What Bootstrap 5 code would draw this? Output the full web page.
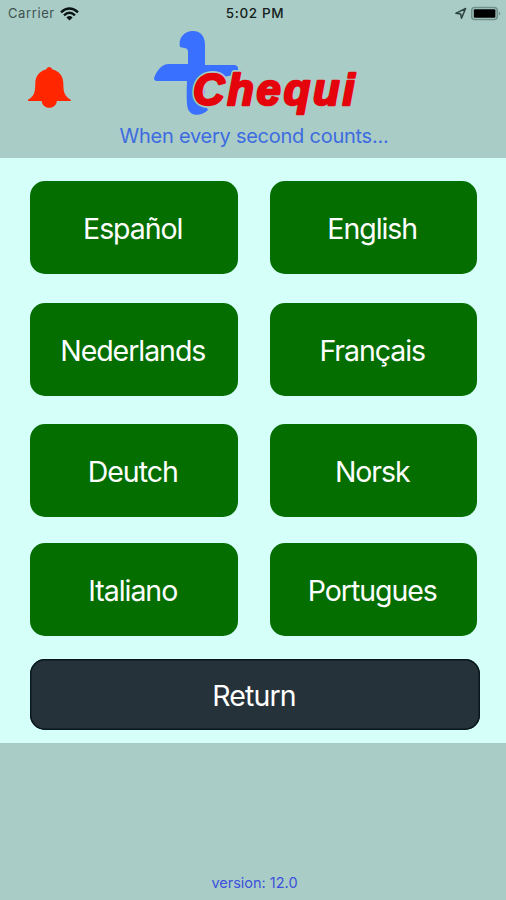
<!DOCTYPE html>
<html lang="en">
<head>
<meta charset="utf-8">
<meta name="viewport" content="width=device-width, initial-scale=1">
<title>Chequi</title>
<link href="https://cdn.jsdelivr.net/npm/bootstrap@5.3.0/dist/css/bootstrap.min.css" rel="stylesheet">
<style>
body{background:#aaccc6;font-family:Inter,"Liberation Sans",sans-serif;height:900px;overflow:hidden}
.status{height:27px;font-size:13px;color:#142120;padding:0 5px 0 8px}
.status>div{flex:1 1 0}
.carrier{color:#3d5450;letter-spacing:.6px}
.wifi{margin-left:-3px}
.clock{font-weight:500;font-size:13.5px;letter-spacing:.6px;padding-left:1px}
.brand{height:131px}
.brand-bell{width:75px;padding:38px 0 0 28px}
.brand-mid{width:358px}
.tagline{font-size:20px;line-height:24px;color:#3d6be0;margin-top:3px;letter-spacing:-.25px;white-space:nowrap}
.panel{background:#d5fff9;height:584.5px;padding:23px 26px 0 30px}
.langs{display:grid;grid-template-columns:207.5px 207.5px;column-gap:32px;grid-template-rows:95px 94px 92px 93px;row-gap:27px}
.langs .btn,.btn-return{border:0;border-radius:15px;color:#fff;font-size:28.5px;line-height:1;letter-spacing:-1.05px;padding:3px 2px 0 0}
.langs .btn,.langs .btn:hover{height:93px;background:#046e00;color:#fff}
.btn-return,.btn-return:hover{background:#26323a;color:#fff;width:450px;height:71px;margin-top:23px;letter-spacing:-.85px;box-shadow:inset 0 0 0 1.5px #08171d}
.version{color:#3b51dc;font-size:14.5px;line-height:18px;padding:0 0 8px 3px}
</style>
</head>
<body class="d-flex flex-column">
<header>
  <div class="status d-flex align-items-center">
    <div class="d-flex align-items-center gap-2">
      <span class="carrier">Carrier</span>
      <svg class="wifi" width="19" height="14" viewBox="0 0 19 14" fill="none" stroke="#071412" stroke-width="2.4"><path d="M1 5.3Q9.5-2.4 18 5.3M4 8.3Q9.5 3.4 15 8.3"/><path d="M6.4 10.4Q9.5 7.7 12.6 10.4L9.5 13.5Z" fill="#071412" stroke="none"/></svg>
    </div>
    <div class="clock text-center">5:02 PM</div>
    <div class="d-flex justify-content-end align-items-center">
      <svg width="47" height="15" viewBox="0 0 47 15"><path d="M1.8 7.3 11.6 2.5 7.5 12.3 6.7 8Z" fill="none" stroke="#2c4541" stroke-width="1.5" stroke-linejoin="round"/><rect x="17.7" y="1.5" width="25.5" height="12" rx="3" fill="#aaccc6" stroke="#71908b" stroke-width="1.6"/><rect x="19.8" y="3.3" width="21.6" height="8.4" rx="1" fill="#000"/><path d="M44.8 5.2Q47.6 7.5 44.8 9.8Z" fill="#71908b"/></svg>
    </div>
  </div>
  <div class="brand d-flex">
    <div class="brand-bell">
      <svg width="43" height="44" viewBox="0 0 43 44" fill="#ff2600"><path d="M21.2 2C22.7 2 23.5 3.3 24.6 4.4C31.5 6.4 35.2 11 35.3 18C35.5 26 35.5 30.5 42.8 34.8V36H28.8C28.8 39.5 25.6 42.8 21.3 42.8S13.8 39.5 13.8 36H0V34.8C7.2 30.5 7.1 26 7.3 18C7.5 11 11.1 6.4 18 4.4C19 3.3 19.7 2 21.2 2Z"/></svg>
    </div>
    <div class="brand-mid text-center">
      <svg width="220" height="94" viewBox="144 27 220 94">
        <path d="M180 47C178 38 184 31 193 31C201 31 205 37 205 45V65H234Q238 65 238 69V74L205 81V106Q208 109 208 110C202 116 191 117 188 109Q186 104 187 81H157Q154 81 154 78C156 72 161 64 169 64H188V52Q188 48 184 48Z" fill="#3a70ff"/>
        <g font-family="Liberation Sans" font-weight="700" font-style="italic" font-size="43.5" stroke-linejoin="round">
          <text x="193" y="105.2" textLength="161.5" lengthAdjust="spacing" fill="#aaccc6" stroke="#aaccc6" stroke-width="5.8">Chequi</text>
          <text x="193" y="105.2" textLength="161.5" lengthAdjust="spacing" fill="#e5040b" stroke="#e5040b" stroke-width="2.5">Chequi</text>
        </g>
      </svg>
      <div class="tagline">When every second counts...</div>
    </div>
  </div>
</header>
<main class="panel">
  <div class="langs">
    <button class="btn">Español</button><button class="btn">English</button>
    <button class="btn">Nederlands</button><button class="btn">Français</button>
    <button class="btn">Deutch</button><button class="btn">Norsk</button>
    <button class="btn">Italiano</button><button class="btn">Portugues</button>
  </div>
  <button class="btn btn-return">Return</button>
</main>
<footer class="version text-center mt-auto">version: 12.0</footer>
<script src="https://cdn.jsdelivr.net/npm/bootstrap@5.3.0/dist/js/bootstrap.bundle.min.js"></script>
</body>
</html>
